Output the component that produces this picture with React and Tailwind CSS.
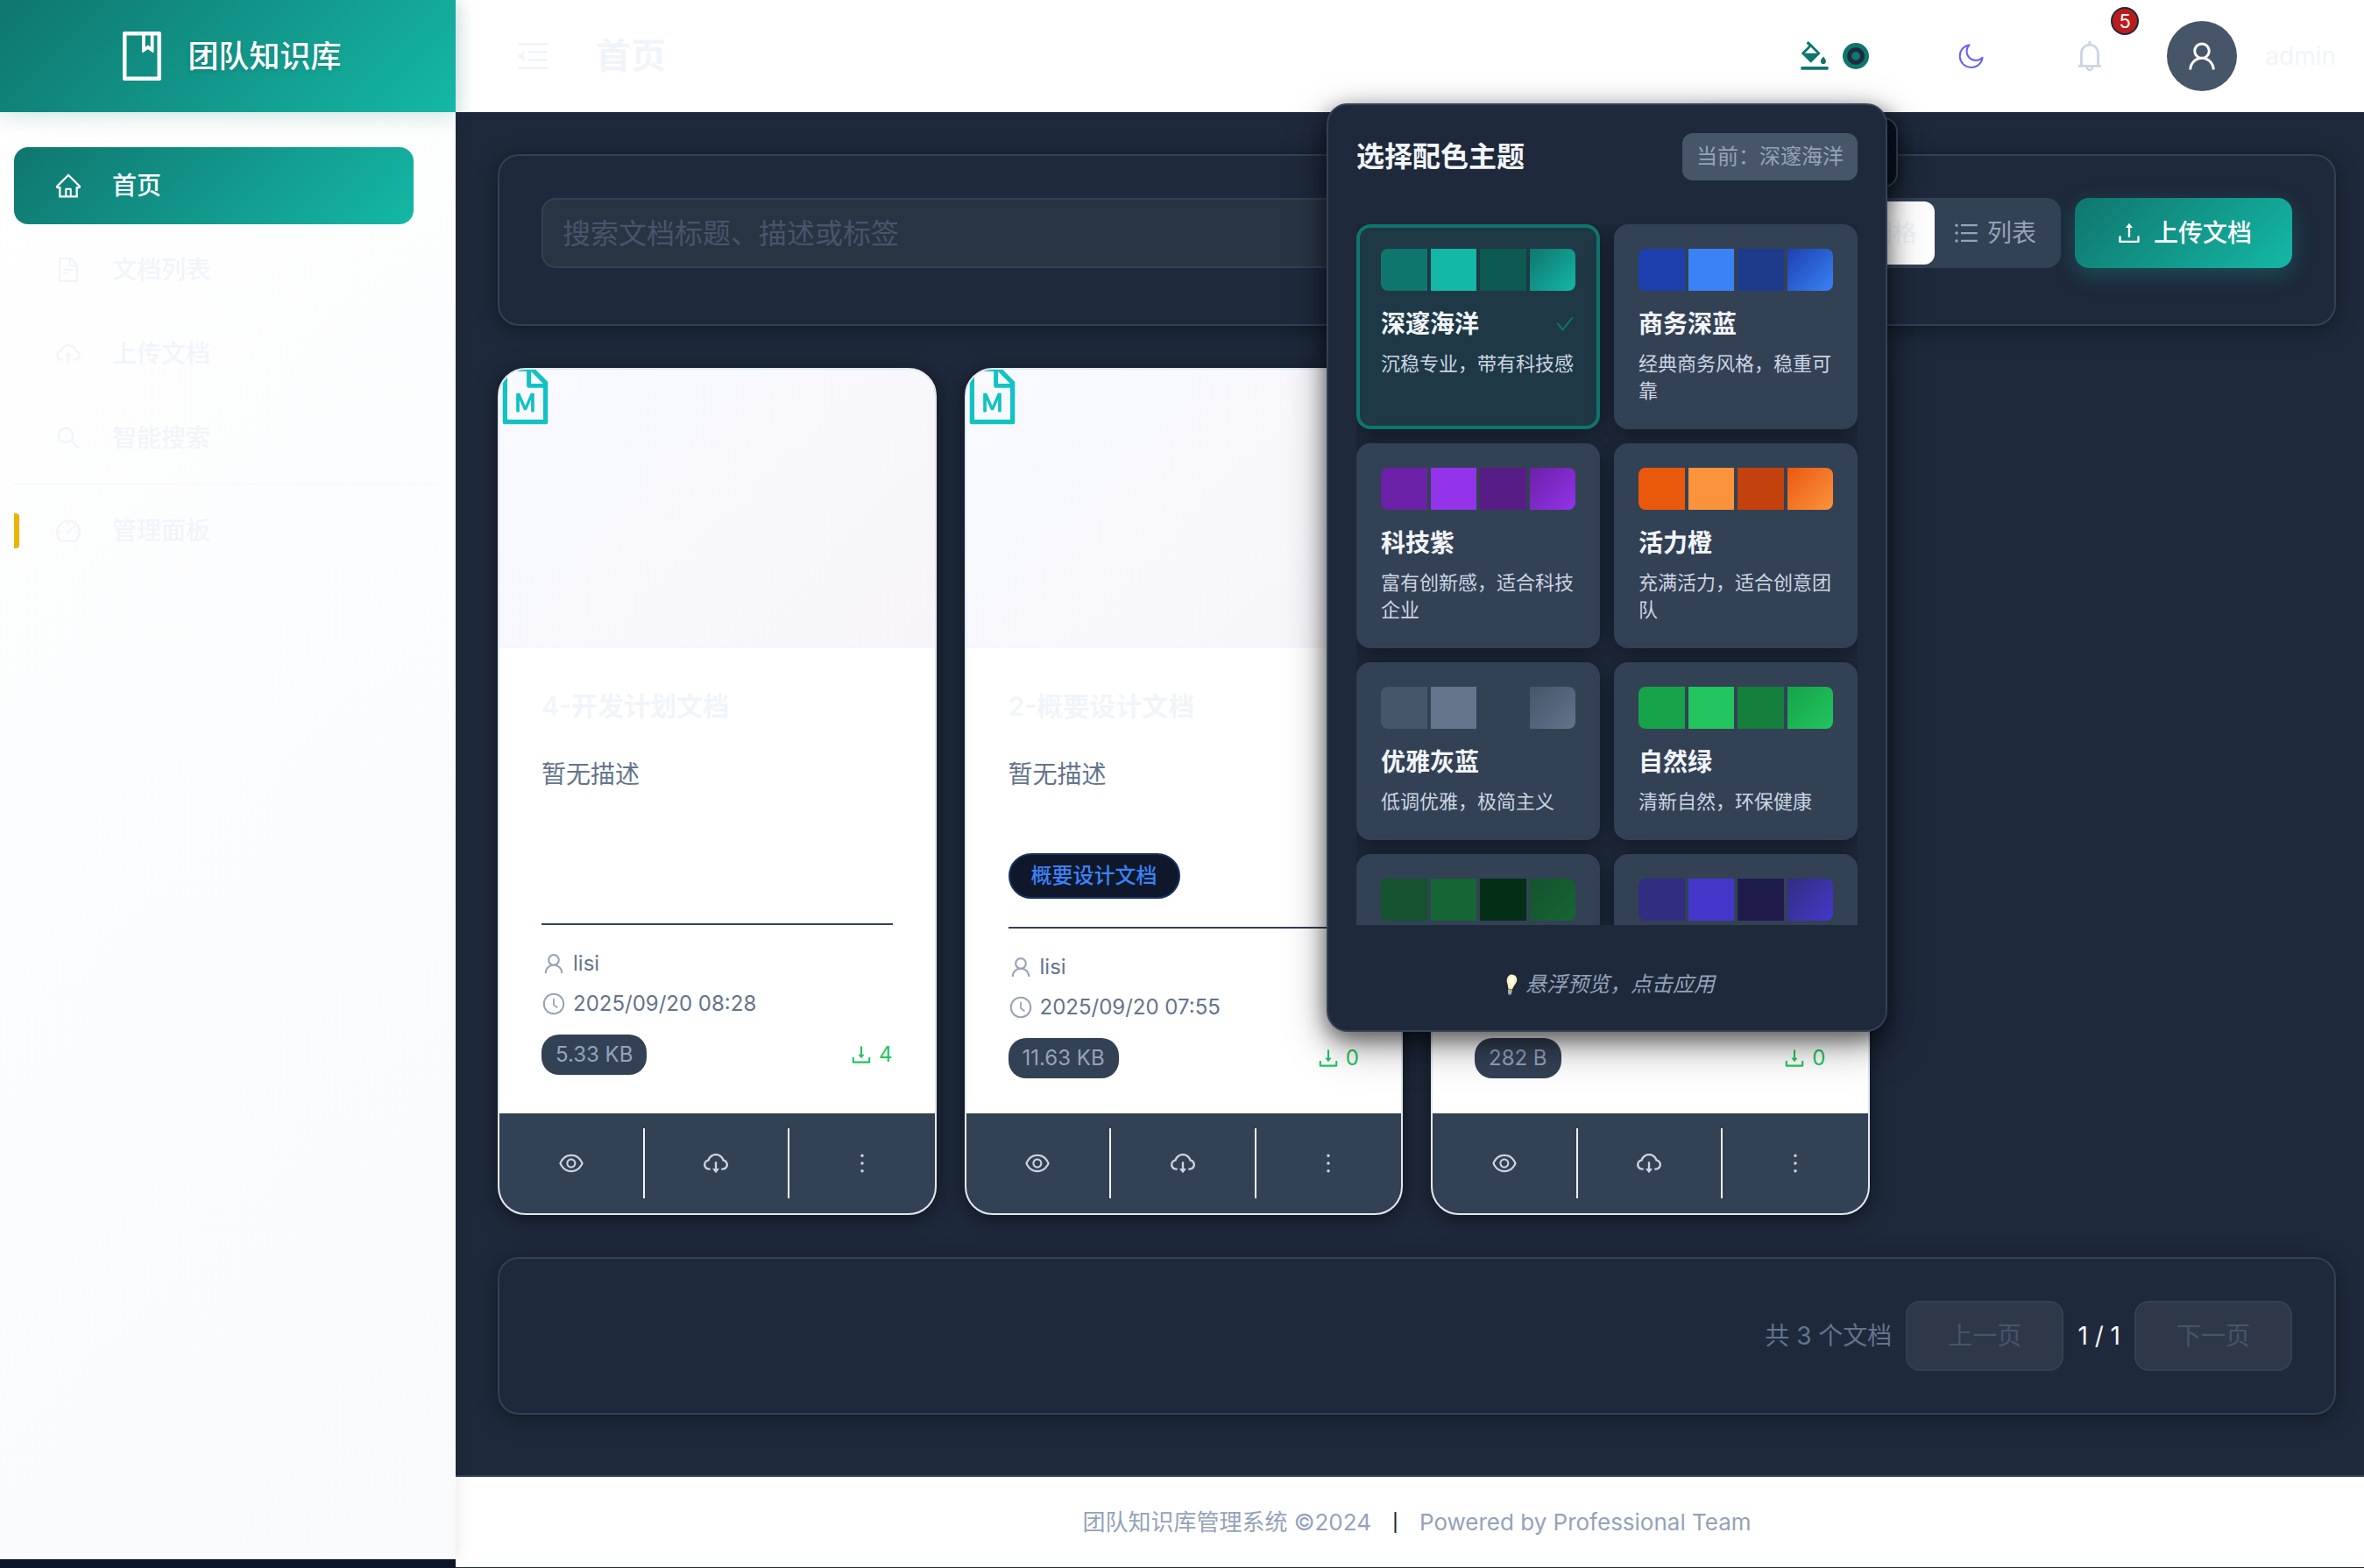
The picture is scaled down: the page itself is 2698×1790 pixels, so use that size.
import React from "react";
import {
  AiOutlineBook, AiOutlineHome, AiOutlineFileText, AiOutlineCloudUpload, AiOutlineSearch,
  AiOutlineDashboard, AiOutlineMenuFold, AiOutlineBgColors, AiOutlineBell, AiOutlineUser,
  AiOutlineUnorderedList, AiOutlineAppstore, AiOutlineUpload, AiOutlineFileMarkdown,
  AiOutlineClockCircle, AiOutlineDownload, AiOutlineEye, AiOutlineCloudDownload,
  AiOutlineMore, AiOutlineCheck,
} from "react-icons/ai";

const NAV = [
  { label: "文档列表", Icon: AiOutlineFileText },
  { label: "上传文档", Icon: AiOutlineCloudUpload },
  { label: "智能搜索", Icon: AiOutlineSearch },
];

const DOCS = [
  { title: "4-开发计划文档", tag: null, time: "2025/09/20 08:28", size: "5.33 KB", downloads: 4 },
  { title: "2-概要设计文档", tag: "概要设计文档", time: "2025/09/20 07:55", size: "11.63 KB", downloads: 0 },
  { title: "1-需求文档", tag: "需求文档", time: "2025/09/20 07:50", size: "282 B", downloads: 0 },
];

const THEMES = [
  { name: "深邃海洋", desc: "沉稳专业，带有科技感", active: true, colors: ["bg-[#0f766e]", "bg-[#14b8a6]", "bg-[#0d5a52]", "bg-linear-135 from-[#0f766e] to-[#14b8a6]"] },
  { name: "商务深蓝", desc: "经典商务风格，稳重可靠", colors: ["bg-[#1e40af]", "bg-[#3b82f6]", "bg-[#1e3a8a]", "bg-linear-135 from-[#1e40af] to-[#3b82f6]"] },
  { name: "科技紫", desc: "富有创新感，适合科技企业", colors: ["bg-[#6b21a8]", "bg-[#9333ea]", "bg-[#581c87]", "bg-linear-135 from-[#6b21a8] to-[#9333ea]"] },
  { name: "活力橙", desc: "充满活力，适合创意团队", colors: ["bg-[#ea580c]", "bg-[#fb923c]", "bg-[#c2410c]", "bg-linear-135 from-[#ea580c] to-[#fb923c]"] },
  { name: "优雅灰蓝", desc: "低调优雅，极简主义", colors: ["bg-[#475569]", "bg-[#64748b]", "bg-[#334155]", "bg-linear-135 from-[#475569] to-[#64748b]"] },
  { name: "自然绿", desc: "清新自然，环保健康", colors: ["bg-[#16a34a]", "bg-[#22c55e]", "bg-[#15803d]", "bg-linear-135 from-[#16a34a] to-[#22c55e]"] },
  { name: "森林绿", desc: "沉静深邃，自然稳重", colors: ["bg-[#14532d]", "bg-[#166534]", "bg-[#052e16]", "bg-linear-135 from-[#14532d] to-[#166534]"] },
  { name: "深靛蓝", desc: "深沉内敛，专业可信", colors: ["bg-[#312e81]", "bg-[#4338ca]", "bg-[#1e1b4b]", "bg-linear-135 from-[#312e81] to-[#4338ca]"] },
];

function Moon() {
  return (
    <svg viewBox="0 0 32 32" className="size-8 fill-none stroke-[#6366f1] stroke-2" strokeLinejoin="round" aria-hidden="true">
      <path d="M14.5 3.2 A 13 13 0 1 0 29.6 17.8 A 8.6 8.6 0 0 1 14.5 3.2 Z" />
    </svg>
  );
}

function Bulb() {
  return (
    <svg viewBox="0 0 24 28" className="h-7 w-6" aria-hidden="true">
      <path d="M14.5 2.5c4 .3 6.300 3.200 5.700 6.900-.6 3.300-3.700 5.400-5.200 10.200l-4.800-1C10.600 14.200 8.300 12 8.800 8.500c.5-3.600 2.700-6.200 5.700-6z" fill="#fdf0b8" />
      <path d="M14.200 4.300c2.600 0 4 2 3.600 4.600-.4 2.500-2.500 4.400-3.600 7.200-1.200-2.200-3-4.200-2.700-7 .3-2.700 1.300-4.500 2.700-4.800z" fill="#fffdf0" />
      <path d="M10.200 18.800l4.700 1-1 5.200c-.8 1.300-3 1.100-3.800-.2z" fill="#8f8f92" />
      <path d="M10.100 20.600l4.500.8M10 22.800l4.200.7" stroke="#d9d9dc" strokeWidth="0.9" />
    </svg>
  );
}

function Sidebar() {
  return (
    <aside className="relative z-10 mb-2.5 flex w-[520px] shrink-0 flex-col bg-linear-135 from-white to-[#f8fafc] shadow-[4px_0_16px_rgba(0,0,0,0.08)]">
      <div className="flex h-32 items-center justify-center gap-5 bg-linear-135 from-[#0f766e] to-[#14b8a6] text-white shadow-[0_4px_24px_rgba(15,118,110,0.2)]">
        <AiOutlineBook className="size-16" />
        <span className="text-[35px] font-medium [text-shadow:0_2px_4px_rgba(0,0,0,0.15)]">团队知识库</span>
      </div>
      <nav className="flex flex-col gap-2 px-4 pt-10 text-[28px] font-medium text-[#f1f5f9]">
        <a href="#home" className="mr-8 flex h-22 items-center gap-[34px] rounded-2xl bg-linear-135 from-[#0f766e] to-[#14b8a6] pl-[46px] text-white">
          <AiOutlineHome className="size-8" />
          首页
        </a>
        {NAV.map(({ label, Icon }) => (
          <a key={label} href="#nav" className="mr-8 flex h-22 items-center gap-[34px] pl-[46px]">
            <Icon className="size-8" />
            {label}
          </a>
        ))}
        <hr className="border-t-2 border-[#f8fafc]" />
        <a href="#admin" className="mr-8 flex h-22 items-center">
          <span className="h-10 w-1.5 rounded-r-sm bg-[#eab308]" />
          <AiOutlineDashboard className="mr-[34px] ml-10 size-8" />
          管理面板
        </a>
      </nav>
    </aside>
  );
}

function Header() {
  return (
    <header className="flex h-32 items-center bg-white pr-8 pl-16">
      <button type="button" aria-label="收起菜单" className="flex size-12 items-center justify-center text-[#f1f5f9]">
        <AiOutlineMenuFold className="size-11" />
      </button>
      <h1 className="ml-12 text-[40px] font-semibold text-[#f1f5f9]">首页</h1>
      <div className="ml-auto flex items-center">
        <button type="button" aria-label="主题" className="flex items-center gap-3 text-[#0f766e]">
          <AiOutlineBgColors className="size-10" />
          <span className="flex size-[30px] items-center justify-center rounded-full bg-[#0f766e]">
            <span className="size-5 rounded-full border-5 border-[#1e293b] bg-[#0f766e]" />
          </span>
        </button>
        <button type="button" aria-label="深色模式" className="ml-25">
          <Moon />
        </button>
        <button type="button" aria-label="通知" className="relative ml-25 text-[#cbd5e1]">
          <AiOutlineBell className="size-10" />
          <span className="absolute -top-9 left-11 flex size-8 items-center justify-center rounded-full border-2 border-[#1e293b] bg-[#b91c1c] text-[22px] leading-none text-white">5</span>
        </button>
        <button type="button" className="ml-17 flex items-center gap-8 text-[28px] text-[#f1f5f9]">
          <span className="flex size-20 items-center justify-center rounded-full bg-[#475569] text-white">
            <AiOutlineUser className="size-10" />
          </span>
          admin
        </button>
      </div>
    </header>
  );
}

function SearchPanel() {
  return (
    <section className="flex h-[196px] items-start gap-4 rounded-3xl border-2 border-[#334155] bg-[#1e293b] p-12 shadow-[0_4px_24px_rgba(0,0,0,0.4)]">
      <input
        aria-label="搜索文档"
        placeholder="搜索文档标题、描述或标签"
        className="h-20 min-w-0 flex-1 rounded-2xl border-2 border-[#334155] bg-[#293443] px-[22px] text-[32px] text-[#f1f5f9] placeholder:text-[#475569]"
      />
      <div className="flex h-20 rounded-2xl bg-[#334155] p-1 text-[28px]">
        <button type="button" className="flex items-center gap-3 rounded-xl bg-white px-5 text-[#f1f5f9]">
          <AiOutlineAppstore className="size-8" />
          网格
        </button>
        <button type="button" className="flex items-center gap-2 pr-6 pl-5 text-[#94a3b8]">
          <AiOutlineUnorderedList className="size-8" />
          列表
        </button>
      </div>
      <button type="button" className="flex h-20 w-[248px] items-center justify-center gap-3 rounded-2xl bg-linear-135 from-[#0f766e] to-[#14b8a6] text-[28px] font-medium text-white shadow-[0_8px_24px_rgba(20,184,166,0.25)]">
        <AiOutlineUpload className="size-8" />
        上传文档
      </button>
    </section>
  );
}

function DocCard({ doc }) {
  return (
    <article className="flex flex-col overflow-hidden rounded-[32px] border-2 border-[#e2e8f0] bg-white shadow-[0_4px_24px_rgba(0,0,0,0.5)]">
      <div className="h-[318px] overflow-hidden bg-linear-135 from-[#f8faff] to-[#f7f5fa]">
        <AiOutlineFileMarkdown className="-mt-2 -ml-2 size-[75px] text-[#13c2c2]" />
      </div>
      <div className="flex flex-1 flex-col px-12 pt-11 pb-10">
        <h2 className="text-[30px] leading-[44px] font-semibold text-[#f1f5f9]">{doc.title}</h2>
        <p className="mt-[34px] mb-6 h-[88px] text-[28px] leading-[44px] text-[#64748b]">暂无描述</p>
        <div className="mb-8 min-h-12">
          {doc.tag && (
            <span className="flex h-13 w-fit items-center rounded-full border-2 border-[#173260] bg-[#0f172a] px-6 text-[24px] font-medium text-[#3b82f6]">{doc.tag}</span>
          )}
        </div>
        <div className="flex flex-col gap-1.5 border-t-2 border-[#334155] pt-6 text-[24px] text-[#64748b]">
          <span className="flex h-10 items-center gap-2">
            <AiOutlineUser className="size-7 text-[#94a3b8]" />
            lisi
          </span>
          <span className="flex h-10 items-center gap-2">
            <AiOutlineClockCircle className="size-7 text-[#94a3b8]" />
            {doc.time}
          </span>
        </div>
        <div className="mt-[15px] flex items-center justify-between text-[24px]">
          <span className="flex h-[46px] items-center rounded-[20px] bg-[#334155] px-4 text-[#94a3b8]">{doc.size}</span>
          <span className="flex items-center gap-1.5 text-[#22c55e]">
            <AiOutlineDownload className="size-7" />
            {doc.downloads}
          </span>
        </div>
      </div>
      <div className="grid h-[114px] grid-cols-3 items-center bg-[#334155] text-[#cbd5e1]">
        <button type="button" aria-label="查看" className="flex h-20 items-center justify-center border-r-2 border-[#f0f0f0]">
          <AiOutlineEye className="size-8" />
        </button>
        <button type="button" aria-label="下载" className="flex h-20 items-center justify-center border-r-2 border-[#f0f0f0]">
          <AiOutlineCloudDownload className="size-8" />
        </button>
        <button type="button" aria-label="更多" className="flex h-20 items-center justify-center">
          <AiOutlineMore className="size-8" />
        </button>
      </div>
    </article>
  );
}

function Pagination() {
  return (
    <section className="flex items-center justify-end gap-4 rounded-3xl border-2 border-[#334155] bg-[#1e293b] p-12 text-[28px] shadow-[0_4px_24px_rgba(0,0,0,0.4)]">
      <span className="text-[#64748b]">共 3 个文档</span>
      <button type="button" disabled className="h-20 w-[180px] rounded-2xl border-2 border-[#334155] bg-[#2f3849] text-[#475569]">上一页</button>
      <span className="text-[#f1f5f9]">1 / 1</span>
      <button type="button" disabled className="h-20 w-[180px] rounded-2xl border-2 border-[#334155] bg-[#2f3849] text-[#475569]">下一页</button>
    </section>
  );
}

function ThemePanel() {
  return (
    <div role="dialog" aria-label="选择配色主题" className="absolute top-[118px] right-[544px] z-30 w-[640px] rounded-3xl border-2 border-[#334155] bg-[#1e293b] p-8 shadow-[0_8px_24px_rgba(0,0,0,0.5),0_16px_48px_rgba(0,0,0,0.35)]">
      <div className="flex items-center justify-between">
        <h2 className="text-[32px] font-semibold text-[#f1f5f9]">选择配色主题</h2>
        <span className="flex h-[54px] items-center rounded-xl bg-[#475569] px-4 text-[24px] text-[#94a3b8]">当前：深邃海洋</span>
      </div>
      <div className="mt-[50px] grid h-[800px] grid-cols-2 content-start gap-4 overflow-hidden">
        {THEMES.map((t) => (
          <button
            key={t.name}
            type="button"
            className={
              t.active
                ? "flex flex-col rounded-2xl border-4 border-[#0f766e] bg-[#1e3846] p-6 text-left shadow-[0_4px_24px_rgba(0,0,0,0.4)]"
                : "flex flex-col rounded-2xl border-4 border-[#334155] bg-[#334155] p-6 text-left shadow-[0_4px_24px_rgba(0,0,0,0.4)]"
            }
          >
            <span className="mb-4 grid h-12 w-full grid-cols-4 gap-1 overflow-hidden rounded-lg">
              {t.colors.map((c) => (
                <span key={c} className={c} />
              ))}
            </span>
            <span className="mb-2 flex w-full items-center justify-between text-[28px] leading-[44px] font-semibold text-[#f1f5f9]">
              {t.name}
              {t.active && <AiOutlineCheck className="size-6 text-[#0f766e]" />}
            </span>
            <span className="text-[22px] leading-[31px] text-[#cbd5e1]">{t.desc}</span>
          </button>
        ))}
      </div>
      <p className="mt-12 flex h-10 items-center justify-center gap-1.5 text-[24px] text-[#94a3b8] italic">
        <Bulb />
        悬浮预览，点击应用
      </p>
    </div>
  );
}

export default function App() {
  return (
    <div className="relative flex min-h-screen overflow-hidden bg-[#0f172a] [font-family:Inter,'Noto_Sans_CJK_SC',sans-serif]">
      <Sidebar />
      <div className="flex min-w-0 flex-1 flex-col bg-[#1e293b]">
        <Header />
        <main className="flex flex-1 flex-col gap-12 pt-12 pr-8 pb-16 pl-12">
          <SearchPanel />
          <section className="grid grid-cols-4 gap-8">
            {DOCS.map((d) => (
              <DocCard key={d.title} doc={d} />
            ))}
          </section>
          <Pagination />
        </main>
        <footer className="mb-px flex h-[105px] items-center justify-center gap-6 border-t-2 border-[#334155] bg-white pl-4 text-[26px] text-[#94a3b8]">
          <span>团队知识库管理系统 ©2024</span>
          <span className="text-[20px] font-medium text-[#1e293b]">|</span>
          <span>Powered by Professional Team</span>
        </footer>
      </div>
      <div className="absolute top-[134px] right-[532px] z-20 h-20 w-60 rounded-2xl border-2 border-[#334155] bg-[#0a1020] shadow-[0_4px_24px_rgba(0,0,0,0.5)]" />
      <ThemePanel />
    </div>
  );
}
